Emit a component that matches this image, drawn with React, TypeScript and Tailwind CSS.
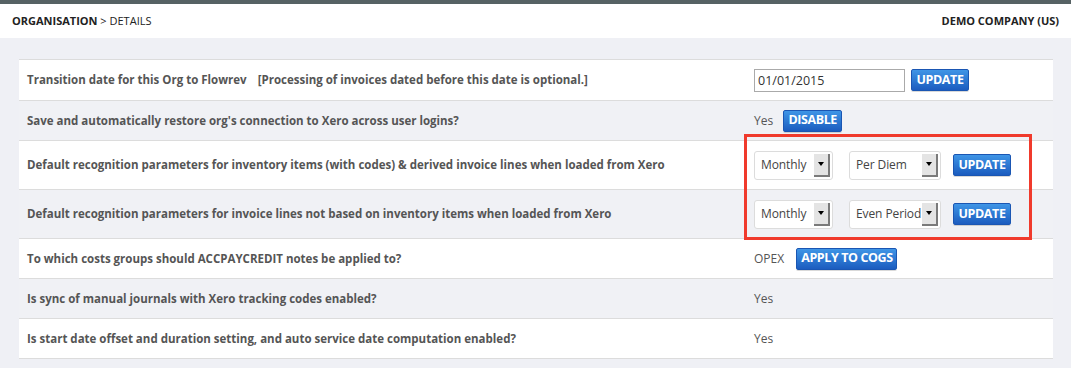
import React from "react";

const font = { fontFamily: "'Open Sans', 'Noto Sans', sans-serif" };

function BlueButton({ label, className = "" }: { label: string; className?: string }) {
  return (
    <button
      className={`h-[22px] px-[4px] rounded-[2px] bg-gradient-to-b from-[#3f95e6] to-[#1c5cbf] border border-[#1a56b3] text-white text-[12.5px] font-bold leading-none tracking-[-0.4px] whitespace-nowrap shadow-[0_1px_0_rgba(0,0,0,0.15)] ${className}`}
    >
      {label}
    </button>
  );
}

function FakeSelect({ value, width }: { value: string; width: string }) {
  return (
    <div
      className={`${width} h-[29px] flex items-stretch rounded-[3px] border border-[#dcdcdc] bg-white p-[2px]`}
    >
      <span className="flex-1 min-w-0 flex items-center pl-[4px] text-[12px] tracking-[-0.1px] text-[#444] whitespace-nowrap">
        {value}
      </span>
      <span className="w-[16px] shrink-0 flex items-center justify-center bg-[#e4e4e4] border-r-2 border-b-2 border-[#7a7a7a]">
        <span className="w-0 h-0 border-l-[3px] border-r-[3px] border-t-[4px] border-l-transparent border-r-transparent border-t-black" />
      </span>
    </div>
  );
}

type Row = { label: React.ReactNode; value: React.ReactNode; tall?: boolean };

const rows: Row[] = [
  {
    label: (
      <>
        Transition date for this Org to Flowrev <span className="ml-[8px]">[Processing of invoices dated before this date is optional.]</span>
      </>
    ),
    value: (
      <div className="flex items-center gap-[6px]">
        <input
          readOnly
          value="01/01/2015"
          className="w-[151px] h-[23px] border border-[#aaa] px-[3px] text-[12.5px] text-[#333] outline-none"
        />
        <BlueButton label="UPDATE" className="w-[58px]" />
      </div>
    ),
  },
  {
    label: "Save and automatically restore org's connection to Xero across user logins?",
    value: (
      <div className="flex items-center gap-[10px]">
        <span>Yes</span>
        <BlueButton label="DISABLE" className="w-[59px] h-[21px]" />
      </div>
    ),
  },
  {
    label: "Default recognition parameters for inventory items (with codes) & derived invoice lines when loaded from Xero",
    tall: true,
    value: (
      <div className="flex items-center">
        <FakeSelect value="Monthly" width="w-[79px]" />
        <div className="w-[16px]" />
        <FakeSelect value="Per Diem" width="w-[92px]" />
        <div className="w-[12px]" />
        <BlueButton label="UPDATE" className="w-[58px] h-[21px]" />
      </div>
    ),
  },
  {
    label: "Default recognition parameters for invoice lines not based on inventory items when loaded from Xero",
    tall: true,
    value: (
      <div className="flex items-center">
        <FakeSelect value="Monthly" width="w-[79px]" />
        <div className="w-[16px]" />
        <FakeSelect value="Even Period" width="w-[92px]" />
        <div className="w-[12px]" />
        <BlueButton label="UPDATE" className="w-[58px] h-[21px]" />
      </div>
    ),
  },
  {
    label: "To which costs groups should ACCPAYCREDIT notes be applied to?",
    value: (
      <div className="flex items-center gap-[12px]">
        <span>OPEX</span>
        <BlueButton label="APPLY TO COGS" className="w-[101px]" />
      </div>
    ),
  },
  { label: "Is sync of manual journals with Xero tracking codes enabled?", value: <span>Yes</span> },
  {
    label: "Is start date offset and duration setting, and auto service date computation enabled?",
    value: <span>Yes</span>,
  },
];

export default function App() {
  return (
    <div className="w-[1071px] h-[368px] bg-[#eff0f5] overflow-hidden" style={font}>
      <div className="h-[4px] bg-[#566264]" />
      <div className="h-[34px] bg-white flex items-center justify-between px-[12px] text-[11px] text-[#222]">
        <div>
          <span className="font-bold">ORGANISATION</span> &gt; DETAILS
        </div>
        <div className="font-bold">DEMO COMPANY (US)</div>
      </div>

      <div className="relative mt-[21px] ml-[19px] w-[1034px] border-t border-[#dcdcdc]">
        {rows.map((r, i) => (
          <div
            key={i}
            className={`flex items-center border-b border-[#dcdcdc] ${r.tall ? "h-[49px]" : "h-[40px]"} ${
              i % 2 === 0 ? "bg-white" : "bg-[#f0f1f5]"
            } ${i === 0 ? "h-[41px]" : ""}`}
          >
            <div className="w-[735px] pl-[8px] text-[11.5px] font-bold text-[#555] whitespace-nowrap">{r.label}</div>
            <div className="flex-1 text-[12px] text-[#555]">{r.value}</div>
          </div>
        ))}
        <div className="absolute left-[725px] top-[74px] w-[288px] h-[106px] border-[3px] border-[#f03a2c] pointer-events-none" />
      </div>
    </div>
  );
}
